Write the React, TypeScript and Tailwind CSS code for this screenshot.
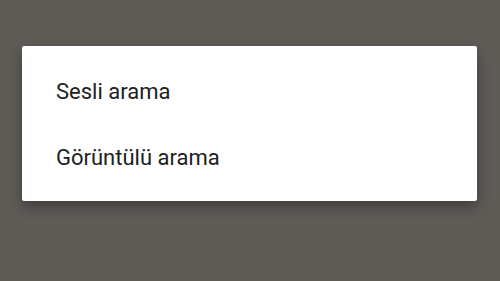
const items = ["Sesli arama", "Görüntülü arama"];

export default function App() {
  return (
    <div className="w-[500px] h-[281px] bg-[#5f5c58] pt-[46px] pl-[22px] pr-[23px] font-['Roboto',sans-serif]">
      <div className="bg-white rounded-[2px] shadow-[0_6px_14px_rgba(0,0,0,0.35)] pt-[12px] pb-[11px]">
        {items.map((item) => (
          <div key={item} className="h-[66px] flex items-center pl-[34px] text-[22px] text-[#212121]">
            {item}
          </div>
        ))}
      </div>
    </div>
  );
}
